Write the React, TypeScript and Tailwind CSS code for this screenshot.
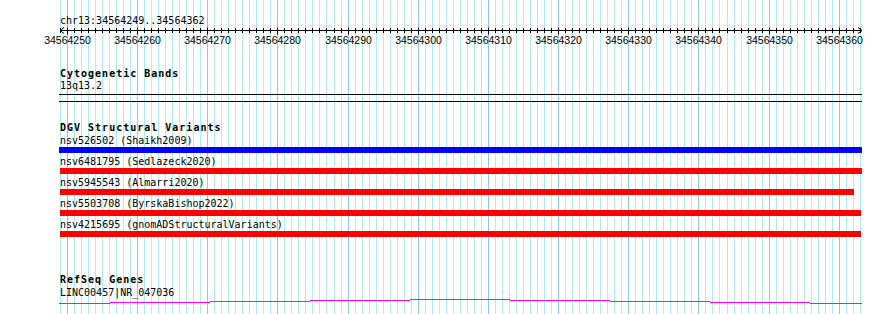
import React from "react";

const N = 115;
const gx = (i: number) => Math.floor(60.3 + 7.018 * i);

const mono = { fontFamily: '"DejaVu Sans Mono", "Liberation Mono", monospace' };

function Grid() {
  return (
    <svg className="absolute left-0 top-0" width={890} height={314}>
      {Array.from({ length: N }, (_, i) => (
        <rect
          key={i}
          x={gx(i)}
          y={0}
          width={1}
          height={314}
          fill={i % 10 === 1 ? "#8ec8f0" : "#afeeee"}
        />
      ))}
    </svg>
  );
}

function Ruler() {
  const off = 59;
  const labels = [] as React.ReactNode[];
  for (let i = 1; i < N; i += 10) {
    labels.push(
      <text
        key={"l" + i}
        x={gx(i) - off + 0.5}
        y={17}
        textAnchor="middle"
        fontSize={10.5}
        fontFamily='"Liberation Sans", Arial, sans-serif'
        fill="#000"
      >
        {34564249 + i}
      </text>
    );
  }
  return (
    <svg width={804} height={20} className="block overflow-visible">
      <line x1={1} y1={3.5} x2={803} y2={3.5} stroke="#000" strokeWidth={1} />
      {Array.from({ length: N }, (_, i) => {
        const x = gx(i) - off + 0.5;
        const major = i % 10 === 1;
        return (
          <line
            key={i}
            x1={x}
            y1={major ? 0.5 : 1}
            x2={x}
            y2={major ? 7.5 : 6}
            stroke="#000"
            strokeWidth={1}
          />
        );
      })}
      <polyline points="5,0.5 1,3.5 5,6.5" fill="none" stroke="#000" strokeWidth={1} />
      <polyline points="799,0.5 803,3.5 799,6.5" fill="none" stroke="#000" strokeWidth={1} />
      {labels}
    </svg>
  );
}

function Label({ children, bold }: { children: React.ReactNode; bold?: boolean }) {
  return (
    <div
      className={
        "relative whitespace-pre text-[10px] leading-[12px] text-black " +
        (bold ? "font-bold tracking-[1px]" : "")
      }
      style={mono}
    >
      {children}
    </div>
  );
}

function Variant({ label, color, ml, w, first }: { label: string; color: string; ml: number; w: number; first?: boolean }) {
  return (
    <div className={first ? "flex flex-col" : "mt-[3px] flex flex-col"}>
      <Label>{label}</Label>
      <div
        className={"relative h-[6px] " + color}
        style={{ marginLeft: ml, width: w }}
      />
    </div>
  );
}

function Gene() {
  const xs = [0, 51, 151, 251, 351, 451, 551, 651, 751, 803];
  const ys = [4, 3, 2, 1, 0, 1, 2, 3, 4];
  return (
    <svg width={803} height={6} className="relative block">
      {ys.map((y, k) => (
        <rect key={k} x={xs[k]} y={y} width={xs[k + 1] - xs[k]} height={1} fill="#ff00ff" />
      ))}
    </svg>
  );
}

export default function App() {
  return (
    <div className="relative h-[314px] w-[890px] overflow-hidden bg-white">
      <Grid />
      <div className="relative flex flex-col pl-[59px] pt-[15px]">
        <div className="pl-[1px]">
          <Label>chr13:34564249..34564362</Label>
        </div>
        <Ruler />
        <div className="mt-[21px] pl-[1px]">
          <Label bold>Cytogenetic Bands</Label>
          <Label>13q13.2</Label>
        </div>
        <div className="relative mt-[2px] h-[8px] w-[803px] border-y border-black" />
        <div className="mt-[20px] flex flex-col">
          <div className="pl-[1px]">
            <Label bold>DGV Structural Variants</Label>
          </div>
          <div className="mt-[1px] flex flex-col pl-[1px]">
            <Variant first label="nsv526502 (Shaikh2009)" color="bg-[#0000ff]" ml={-1} w={803} />
            <Variant label="nsv6481795 (Sedlazeck2020)" color="bg-[#ff0000]" ml={0} w={802} />
            <Variant label="nsv5945543 (Almarri2020)" color="bg-[#ff0000]" ml={0} w={794} />
            <Variant label="nsv5503708 (ByrskaBishop2022)" color="bg-[#ff0000]" ml={0} w={801} />
            <Variant label="nsv4215695 (gnomADStructuralVariants)" color="bg-[#ff0000]" ml={0} w={801} />
          </div>
        </div>
        <div className="mt-[37px] flex flex-col pl-[1px]">
          <Label bold>RefSeq Genes</Label>
          <div className="mt-[1px]">
            <Label>LINC00457|NR_047036</Label>
          </div>
        </div>
        <Gene />
      </div>
    </div>
  );
}
